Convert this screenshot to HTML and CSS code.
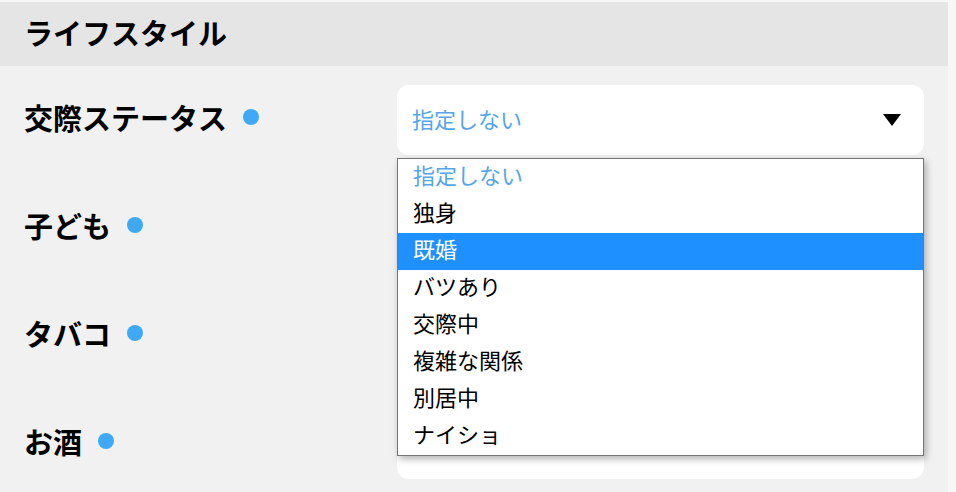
FILE: index.html
```html
<!DOCTYPE html>
<html lang="ja">
<head>
  <meta charset="UTF-8">
  <meta name="viewport" content="width=device-width, initial-scale=1.0">
  <title>ライフスタイル</title>
  <link rel="stylesheet" href="styles.css">
</head>
<body>
  <div class="page">
    <h2 class="section-title">ライフスタイル</h2>
    <div class="form">
      <div class="row">
        <div class="label">交際ステータス<span class="dot"></span></div>
        <div class="field">
          <div class="select">
            <span class="placeholder">指定しない</span>
            <span class="arrow"></span>
          </div>
          <ul class="listbox">
            <li class="placeholder">指定しない</li>
            <li>独身</li>
            <li class="active">既婚</li>
            <li>バツあり</li>
            <li>交際中</li>
            <li>複雑な関係</li>
            <li>別居中</li>
            <li>ナイショ</li>
          </ul>
        </div>
      </div>
      <div class="row">
        <div class="label">子ども<span class="dot"></span></div>
        <div class="field">
          <div class="select">
            <span class="placeholder">指定しない</span>
            <span class="arrow"></span>
          </div>
        </div>
      </div>
      <div class="row">
        <div class="label">タバコ<span class="dot"></span></div>
        <div class="field">
          <div class="select">
            <span class="placeholder">指定しない</span>
            <span class="arrow"></span>
          </div>
        </div>
      </div>
      <div class="row">
        <div class="label">お酒<span class="dot"></span></div>
        <div class="field">
          <div class="select">
            <span class="placeholder">指定しない</span>
            <span class="arrow"></span>
          </div>
        </div>
      </div>
    </div>
  </div>
</body>
</html>
```

FILE: styles.css
```css
html, body {
  margin: 0;
  height: 100%;
  overflow: hidden;
}
body {
  background-color: #f7f7f7;
  padding: 2px 8px 0 0;
  box-sizing: border-box;
  font-family: "Noto Sans CJK JP", "Noto Sans", sans-serif;
  color: #000;
}
.page {
  background-color: #f1f1f1;
  height: 100%;
}
.section-title {
  margin: 0;
  height: 64px;
  display: flex;
  align-items: center;
  padding: 0 0 5px 24px;
  box-sizing: border-box;
  background-color: #e5e5e5;
  font-size: 29px;
  font-weight: bold;
}
.form {
  display: flex;
  flex-direction: column;
  gap: 38px;
  padding: 19px 24px 0 24px;
}
.row {
  display: flex;
  align-items: center;
}
.label {
  width: 373px;
  display: flex;
  align-items: center;
  font-size: 29px;
  font-weight: bold;
  margin-top: -7px;
}
.dot {
  width: 16px;
  height: 16px;
  border-radius: 50%;
  background-color: #3fa9f5;
  margin-left: 16px;
}
.field {
  flex: 1;
  position: relative;
}
.select {
  height: 70px;
  background-color: #fff;
  border-radius: 12px;
  display: flex;
  align-items: center;
  justify-content: space-between;
  padding: 0 23px 0 15px;
  font-size: 22px;
}
.placeholder {
  color: #55a5ea;
}
.select .placeholder {
  margin-top: -4px;
}
.arrow {
  width: 0;
  height: 0;
  border-left: 9px solid transparent;
  border-right: 9px solid transparent;
  border-top: 12px solid #000;
}
.listbox {
  position: absolute;
  top: 73px;
  left: 0;
  right: 0;
  margin: 0;
  padding: 0;
  list-style: none;
  background-color: #fff;
  border: 1px solid #767676;
  box-shadow: 2px 3px 7px rgba(0, 0, 0, 0.3);
  font-size: 22px;
  z-index: 2;
}
.listbox li {
  height: 37px;
  line-height: 31px;
  padding-left: 15px;
}
.listbox li.active {
  background-color: #1e90ff;
  color: #fff;
}
```
